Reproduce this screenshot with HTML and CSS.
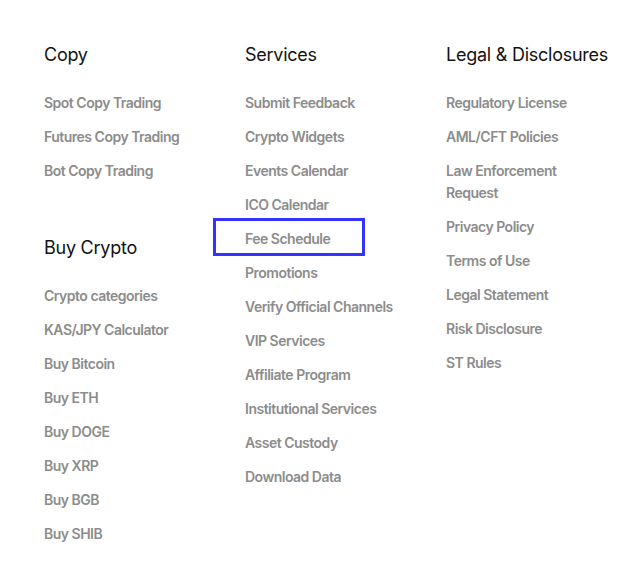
FILE: index.html
```html
<!DOCTYPE html>
<html lang="en">
<head>
    <meta charset="UTF-8">
    <meta name="viewport" content="width=device-width, initial-scale=1.0">
    <title>Footer Links</title>
    <link rel="stylesheet" href="styles.css">
</head>
<body>
    <footer class="footer-links">
        <div class="column">
            <section class="group">
                <h3>Copy</h3>
                <ul>
                    <li><a href="#">Spot Copy Trading</a></li>
                    <li><a href="#">Futures Copy Trading</a></li>
                    <li><a href="#">Bot Copy Trading</a></li>
                </ul>
            </section>
            <section class="group">
                <h3>Buy Crypto</h3>
                <ul>
                    <li><a href="#">Crypto categories</a></li>
                    <li><a href="#">KAS/JPY Calculator</a></li>
                    <li><a href="#">Buy Bitcoin</a></li>
                    <li><a href="#">Buy ETH</a></li>
                    <li><a href="#">Buy DOGE</a></li>
                    <li><a href="#">Buy XRP</a></li>
                    <li><a href="#">Buy BGB</a></li>
                    <li><a href="#">Buy SHIB</a></li>
                </ul>
            </section>
        </div>
        <div class="column">
            <section class="group">
                <h3>Services</h3>
                <ul>
                    <li><a href="#">Submit Feedback</a></li>
                    <li><a href="#">Crypto Widgets</a></li>
                    <li><a href="#">Events Calendar</a></li>
                    <li><a href="#">ICO Calendar</a></li>
                    <li class="highlighted"><a href="#">Fee Schedule</a></li>
                    <li><a href="#">Promotions</a></li>
                    <li><a href="#">Verify Official Channels</a></li>
                    <li><a href="#">VIP Services</a></li>
                    <li><a href="#">Affiliate Program</a></li>
                    <li><a href="#">Institutional Services</a></li>
                    <li><a href="#">Asset Custody</a></li>
                    <li><a href="#">Download Data</a></li>
                </ul>
            </section>
        </div>
        <div class="column">
            <section class="group">
                <h3>Legal &amp; Disclosures</h3>
                <ul>
                    <li><a href="#">Regulatory License</a></li>
                    <li><a href="#">AML/CFT Policies</a></li>
                    <li><a href="#">Law Enforcement Request</a></li>
                    <li><a href="#">Privacy Policy</a></li>
                    <li><a href="#">Terms of Use</a></li>
                    <li><a href="#">Legal Statement</a></li>
                    <li><a href="#">Risk Disclosure</a></li>
                    <li><a href="#">ST Rules</a></li>
                </ul>
            </section>
        </div>
    </footer>
</body>
</html>
```

FILE: styles.css
```css
body {
    margin: 0;
    font-family: Inter, "Noto Sans", Arial, sans-serif;
    background-color: #fff;
}
.footer-links {
    display: grid;
    grid-template-columns: 165px 165px 165px;
    column-gap: 36px;
    padding: 43px 0 0 44px;
}
.column {
    display: flex;
    flex-direction: column;
    gap: 54px;
}
.group h3 {
    margin: 0 0 25px 0;
    font-size: 18px;
    line-height: 24px;
    font-weight: 400;
    letter-spacing: -0.25px;
    color: #121212;
    white-space: nowrap;
}
.group ul {
    list-style: none;
    margin: 0;
    padding: 0;
    display: flex;
    flex-direction: column;
    gap: 12px;
}
.group li {
    font-size: 14px;
    line-height: 22px;
}
.group a {
    color: #8c8c8c;
    font-weight: 600;
    letter-spacing: -0.5px;
    text-decoration: none;
}
.group a:hover {
    color: #121212;
}
.highlighted {
    position: relative;
}
.highlighted::after {
    content: "";
    position: absolute;
    left: -32px;
    top: -10px;
    width: 146px;
    height: 32px;
    border: 3px solid #3333ff;
    pointer-events: none;
}
```
